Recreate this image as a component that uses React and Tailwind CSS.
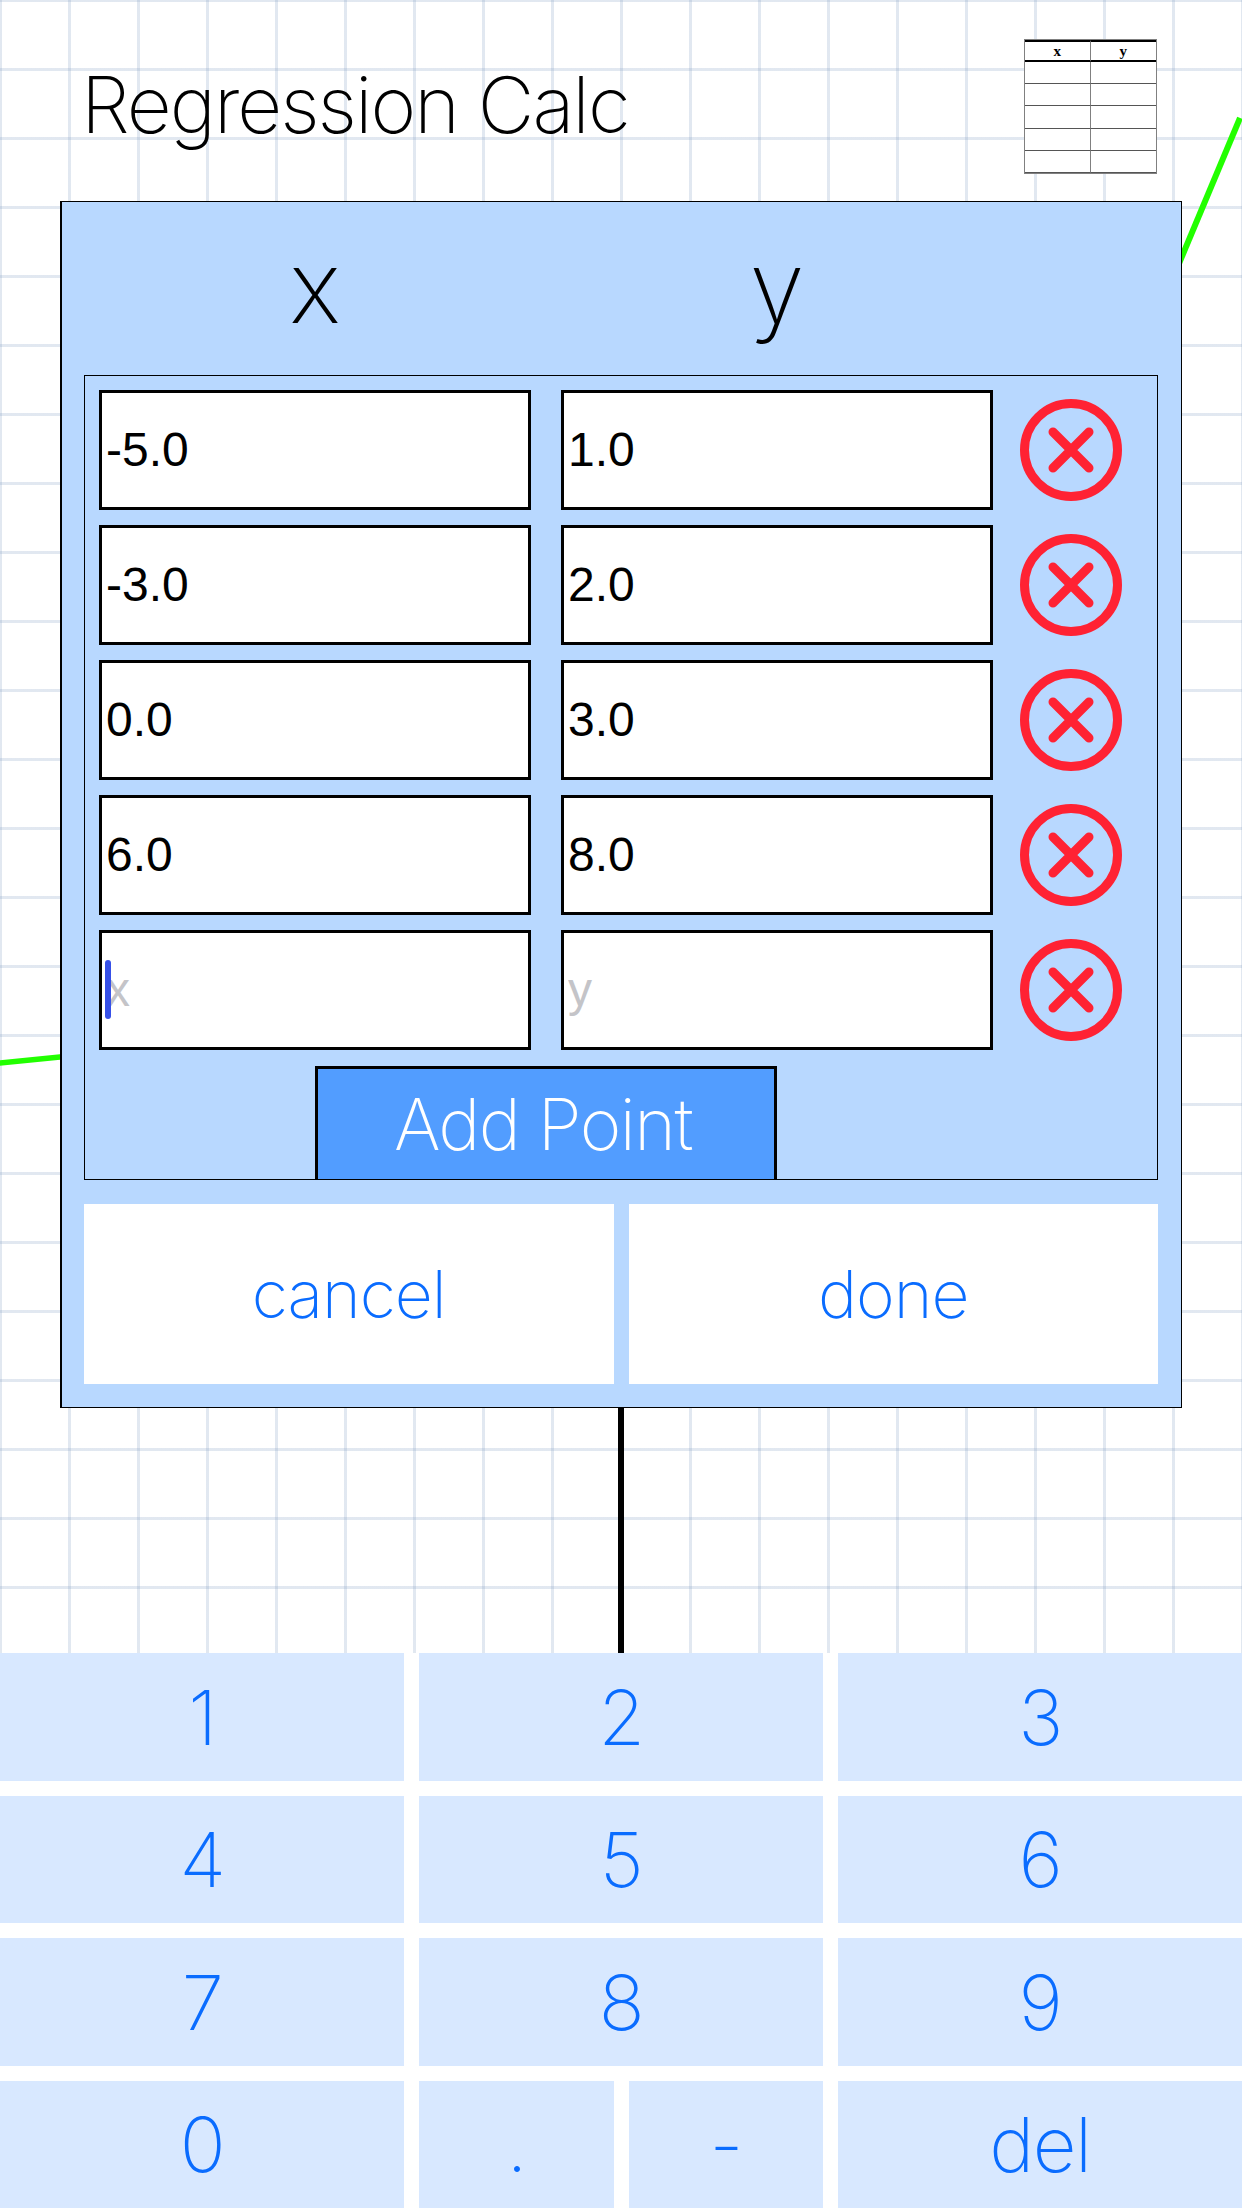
const POINTS = [
  { x: "-5.0", y: "1.0" },
  { x: "-3.0", y: "2.0" },
  { x: "0.0", y: "3.0" },
  { x: "6.0", y: "8.0" },
  { x: "", y: "", focused: true },
];

const KEYS = ["1", "2", "3", "4", "5", "6", "7", "8", "9"];

function RemoveIcon() {
  return (
    <svg width="102" height="102" viewBox="0 0 102 102" fill="none" stroke="#ff2233" className="shrink-0 ml-[27px]">
      <circle cx="51" cy="51" r="46.5" strokeWidth="9" />
      <path d="M33 33 L69 69 M69 33 L33 69" strokeWidth="9" strokeLinecap="round" />
    </svg>
  );
}

function TableIcon() {
  return (
    <div className="w-[133px] h-[135px] bg-white border border-[#808080] grid grid-cols-2 grid-rows-6 font-['Liberation_Serif',serif] font-bold text-[15px] leading-none text-black">
      <div className="flex items-center justify-center border-t-2 border-b-2 border-t-black border-b-black border-r border-r-[#808080]">x</div>
      <div className="flex items-center justify-center border-t-2 border-b-2 border-t-black border-b-black">y</div>
      {[0, 1, 2, 3, 4].map((i) => (
        <div key={i} className="contents">
          <div className="border-b border-b-[#555] border-r border-r-[#808080]" />
          <div className="border-b border-b-[#555]" />
        </div>
      ))}
    </div>
  );
}

function Graph() {
  return (
    <svg width="1242" height="2208" viewBox="0 0 1242 2208" fill="none" className="absolute inset-0">
      <path d="M-4 1063.5 L70 1056" stroke="#22ff00" strokeWidth="5.5" />
      <path d="M1170 285 L1240 118" stroke="#22ff00" strokeWidth="6" />
      <path d="M621 1400 L621 1660" stroke="#000" strokeWidth="6" />
    </svg>
  );
}

function PointRow({ point }) {
  return (
    <div className="flex items-center gap-[30px]">
      <div className="relative">
        <input
          readOnly
          value={point.x}
          placeholder="x"
          className="block w-[432px] h-[120px] bg-white border-[3px] border-black pl-[4px] pb-[2px] text-[48px] text-black placeholder:text-[#c4c4c8] outline-none"
        />
        {point.focused && <div className="absolute left-[6px] top-[30px] w-[6px] h-[59px] rounded-full bg-[#3650e8]" />}
      </div>
      <input
        readOnly
        value={point.y}
        placeholder="y"
        className="block w-[432px] h-[120px] bg-white border-[3px] border-black pl-[4px] pb-[2px] text-[48px] text-black placeholder:text-[#c4c4c8] outline-none"
      />
      <div className="-ml-[30px]">
        <RemoveIcon />
      </div>
    </div>
  );
}

function Key({ label }) {
  return (
    <button type="button" className="h-full bg-[#d8e8ff] text-[#0a6cff] text-[76px] [font-weight:150] tracking-[-1.5px] leading-none flex items-center justify-center">
      {label}
    </button>
  );
}

export default function App() {
  return (
    <div className="relative w-[1242px] h-[2208px] overflow-hidden bg-white font-['Inter',sans-serif] bg-[linear-gradient(to_right,rgba(120,150,190,0.22)_0,rgba(120,150,190,0.22)_3px,transparent_3px),linear-gradient(to_bottom,rgba(120,150,190,0.22)_0,rgba(120,150,190,0.22)_3px,transparent_3px)] bg-[size:69px_69px] bg-[position:-1px_-1px]">
      <Graph />

      <div className="relative flex flex-col h-full">
        <header className="h-[201px] shrink-0 flex items-start justify-between pl-[81px] pr-[85px]">
          <h1 className="mt-[60px] text-[78px] leading-[90px] [font-weight:150] tracking-[-2px] text-black">Regression Calc</h1>
          <div className="mt-[39px]">
            <TableIcon />
          </div>
        </header>

        <section className="ml-[60px] w-[1122px] h-[1207px] shrink-0 bg-[#b8d8ff] border border-l-2 border-black pl-[22px] pr-[23px] flex flex-col">
          <div className="h-[173px] shrink-0 flex pl-[15px] gap-[30px] text-black text-[100px] [font-weight:150]">
            <div className="w-[432px] text-center leading-[130px] mt-[20px]">x</div>
            <div className="w-[432px] text-center leading-[130px] mt-[20px]">y</div>
          </div>

          <div className="h-[805px] shrink-0 border border-black pt-[14px] pl-[14px] flex flex-col gap-[15px] overflow-hidden font-['Liberation_Sans',sans-serif]">
            {POINTS.map((p, i) => (
              <PointRow key={i} point={p} />
            ))}
            <button
              type="button"
              className="mt-px ml-[216px] w-[462px] h-[114px] shrink-0 bg-[#529dff] border-[3px] border-b-0 border-black pr-[6px] text-white text-[71px] [font-weight:150] tracking-[-1.5px] font-['Inter',sans-serif] leading-none"
            >
              Add Point
            </button>
          </div>

          <div className="mt-[24px] h-[180px] flex gap-[15px]">
            <button type="button" className="flex-1 bg-white text-[#0a6cff] text-[66px] [font-weight:150] tracking-[-1px]">cancel</button>
            <button type="button" className="flex-1 bg-white text-[#0a6cff] text-[66px] [font-weight:150] tracking-[-1px]">done</button>
          </div>
        </section>

        <div className="mt-auto h-[555px] bg-white grid grid-cols-3 grid-rows-4 gap-[15px]">
          {KEYS.map((k) => (
            <Key key={k} label={k} />
          ))}
          <Key label="0" />
          <div className="grid grid-cols-2 gap-[15px]">
            <Key label="." />
            <Key label="-" />
          </div>
          <Key label="del" />
        </div>
      </div>
    </div>
  );
}
